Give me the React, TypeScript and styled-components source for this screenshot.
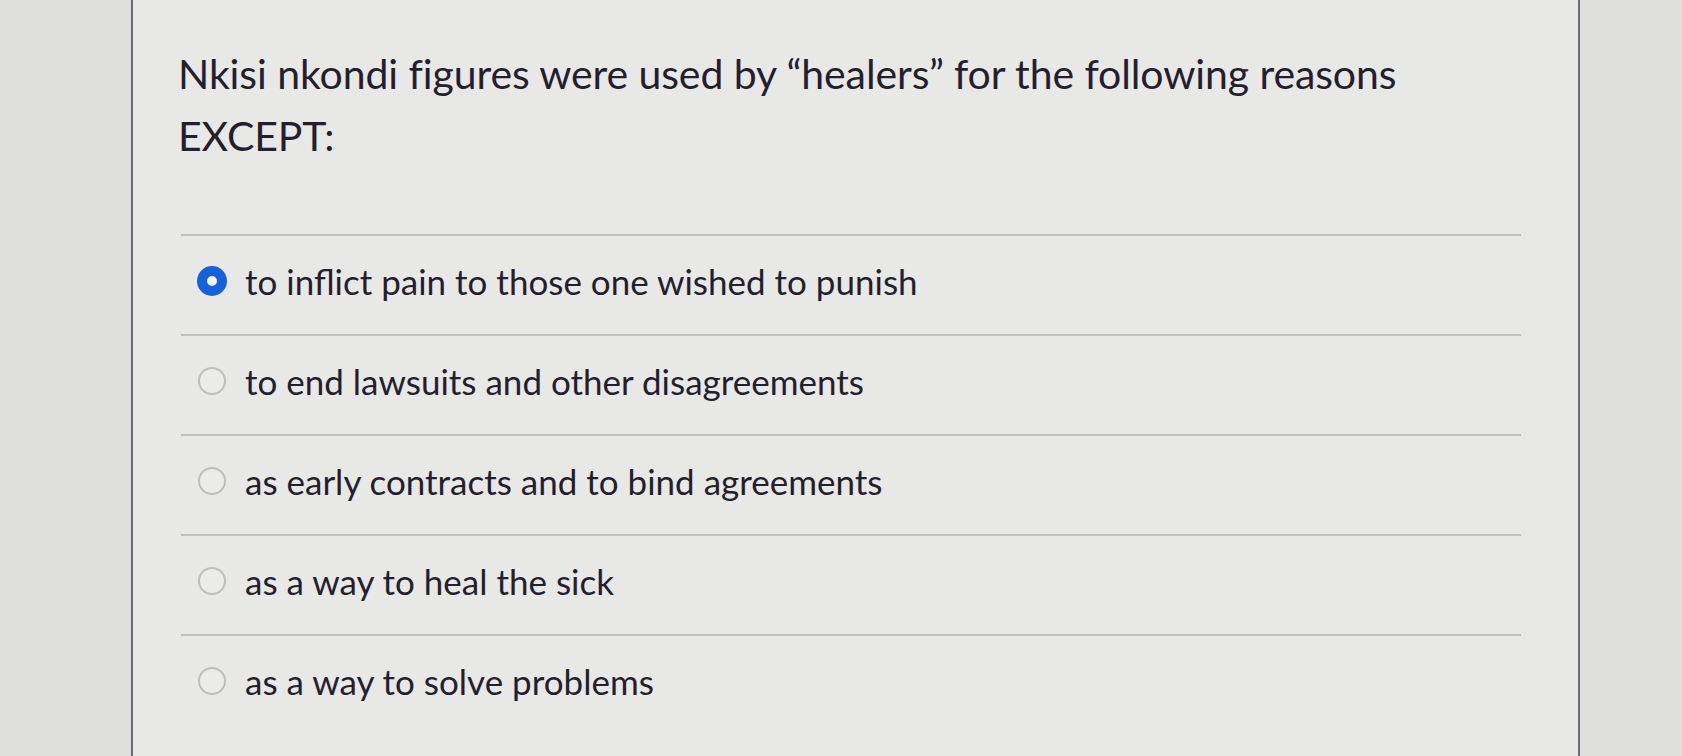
import React, { useState } from "react";
import styled, { createGlobalStyle } from "styled-components";

const GlobalStyle = createGlobalStyle`
  html, body {
    margin: 0;
    padding: 0;
    background: #dfdfdd;
  }
  body {
    font-family: Lato, "Open Sans", "Liberation Sans", sans-serif;
    color: #241f2c;
  }
  * { box-sizing: border-box; }
`;

const Page = styled.div`
  display: flex;
  height: 756px;
  overflow: hidden;
  background: #dfdfdd;
`;

const Gutter = styled.div<{ $width?: number }>`
  flex: ${(p) => (p.$width ? `0 0 ${p.$width}px` : "1 1 auto")};
  background: #dededc;
`;

const Panel = styled.main`
  flex: 0 0 1449px;
  background: #e8e8e6;
  border-left: 2px solid #6d6a79;
  border-right: 2px solid #6d6a79;
  padding: 43px 57px 0 45px;
`;

const Question = styled.h1`
  margin: 0;
  font-family: Lato, "Open Sans", "Liberation Sans", sans-serif;
  font-weight: 400;
  font-size: 41px;
  line-height: 62px;
  color: #241f2c;
  letter-spacing: -0.1px;
`;

const Answers = styled.ul`
  list-style: none;
  margin: 67px 0 0 3px;
  padding: 0;
`;

const Answer = styled.li`
  height: 100px;
  border-top: 2px solid #c1c1bf;
  display: flex;
  align-items: center;
  padding: 0 0 8px 17px;
`;

const Label = styled.label`
  display: flex;
  align-items: center;
  gap: 19px;
  cursor: pointer;
`;

const Radio = styled.input.attrs({ type: "radio" })`
  appearance: none;
  -webkit-appearance: none;
  margin: 0;
  width: 28px;
  height: 28px;
  border-radius: 50%;
  border: 2px solid #bdbdbb;
  background: #ebebe9;
  flex: 0 0 auto;
  &:checked {
    width: 30px;
    height: 30px;
    margin: -1px;
    border: 10px solid #1462dc;
    background: #f4f4f2;
  }
`;

const AnswerText = styled.span`
  font-size: 35px;
  line-height: 42px;
  color: #241f2c;
`;

const options = [
  "to inflict pain to those one wished to punish",
  "to end lawsuits and other disagreements",
  "as early contracts and to bind agreements",
  "as a way to heal the sick",
  "as a way to solve problems",
];

export default function App() {
  const [selected, setSelected] = useState(0);
  return (
    <>
      <GlobalStyle />
      <Page>
        <Gutter $width={131} />
        <Panel>
          <Question>
            Nkisi nkondi figures were used by “healers” for the following reasons
            <br />
            EXCEPT:
          </Question>
          <Answers>
            {options.map((o, i) => (
              <Answer key={o}>
                <Label>
                  <Radio
                    name="q1"
                    checked={selected === i}
                    onChange={() => setSelected(i)}
                  />
                  <AnswerText>{o}</AnswerText>
                </Label>
              </Answer>
            ))}
          </Answers>
        </Panel>
        <Gutter />
      </Page>
    </>
  );
}
